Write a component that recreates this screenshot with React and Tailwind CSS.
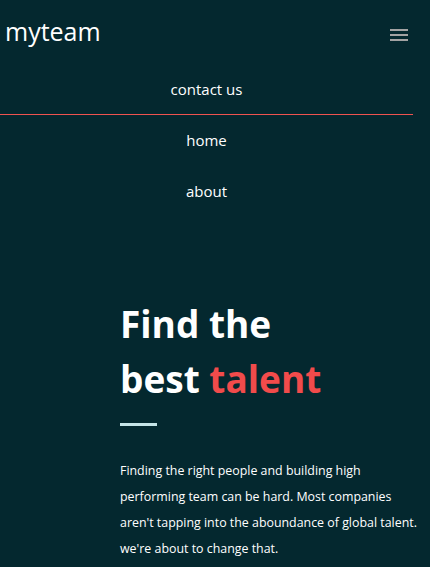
import React from 'react';

const navLinks = ['contact us', 'home', 'about'];

export default function App() {
  return (
    <div className="min-h-screen w-full bg-[#04282f] text-white font-['Open_Sans',sans-serif]">
      <div className="w-[413px]">
        {/* Header */}
        <header className="flex items-center justify-between pl-[5px] pr-[5px] h-[64px]">
          <span className="text-[25px] font-medium leading-none -mt-[2px]">myteam</span>
          <button className="flex flex-col gap-[3px] w-[18px] mt-[6px]">
            <span className="h-[2px] w-full bg-[#a3a3a3]" />
            <span className="h-[2px] w-full bg-[#a3a3a3]" />
            <span className="h-[2px] w-full bg-[#a3a3a3]" />
          </button>
        </header>

        {/* Nav */}
        <nav>
          <ul>
            {navLinks.map((link, i) => (
              <li
                key={link}
                className={`h-[51px] flex items-center justify-center text-[15px] ${
                  i === 0 ? 'border-b border-[#ef5350]' : ''
                }`}
              >
                {link}
              </li>
            ))}
          </ul>
        </nav>

        {/* Hero */}
        <section className="pl-[120px] pt-[79px]">
          <h1 className="text-[37px] font-bold leading-[55px]">
            Find the
            <br />
            best <span className="text-[#f14b4b]">talent</span>
          </h1>
          <div className="mt-[17px] h-[3px] w-[37px] bg-[#c5e4e7]" />
          <p className="mt-[32px] text-[12.4px] leading-[26px] whitespace-nowrap">
            Finding the right people and building high
            <br />
            performing team can be hard. Most companies
            <br />
            aren't tapping into the aboundance of global talent.
            <br />
            we're about to change that.
          </p>
        </section>
      </div>
    </div>
  );
}
